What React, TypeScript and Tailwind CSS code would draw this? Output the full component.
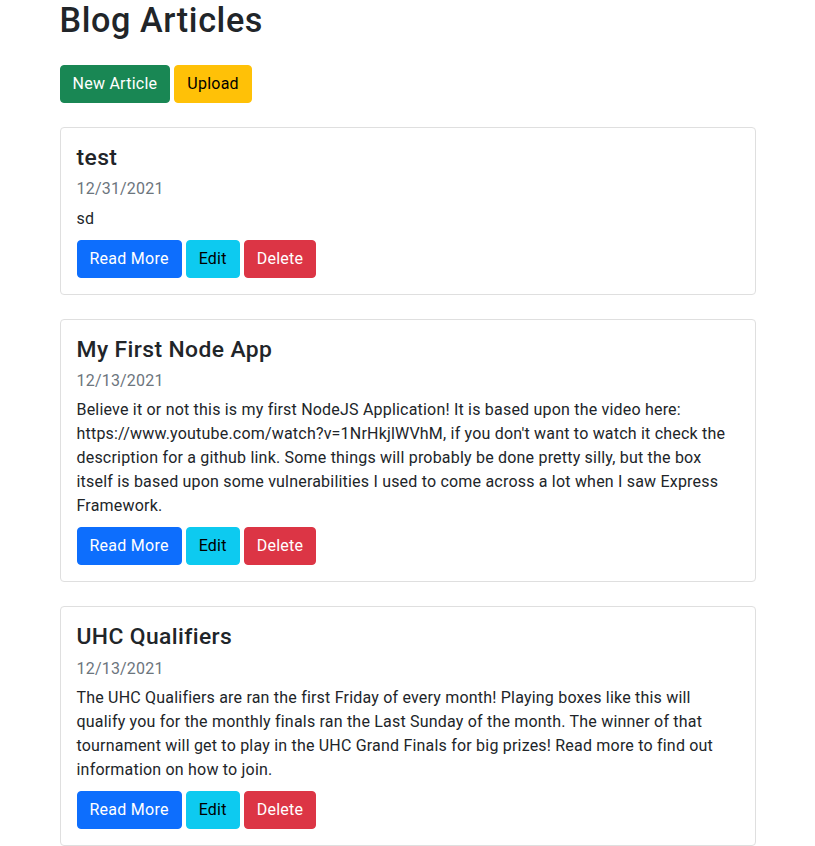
import React from "react";

type Article = { title: string; date: string; lines: string[] };

const articles: Article[] = [
  { title: "test", date: "12/31/2021", lines: ["sd"] },
  {
    title: "My First Node App",
    date: "12/13/2021",
    lines: [
      "Believe it or not this is my first NodeJS Application! It is based upon the video here:",
      "https://www.youtube.com/watch?v=1NrHkjlWVhM, if you don't want to watch it check the",
      "description for a github link. Some things will probably be done pretty silly, but the box",
      "itself is based upon some vulnerabilities I used to come across a lot when I saw Express",
      "Framework.",
    ],
  },
  {
    title: "UHC Qualifiers",
    date: "12/13/2021",
    lines: [
      "The UHC Qualifiers are ran the first Friday of every month! Playing boxes like this will",
      "qualify you for the monthly finals ran the Last Sunday of the month. The winner of that",
      "tournament will get to play in the UHC Grand Finals for big prizes! Read more to find out",
      "information on how to join.",
    ],
  },
];

const btn =
  "inline-block h-[38px] px-3 rounded-[4px] border text-[16px] leading-[24px] py-[6px] tracking-[0.25px]";

export default function App() {
  return (
    <div
      className="min-h-screen bg-white text-[#212529]"
      style={{ fontFamily: "Roboto, 'Noto Sans', sans-serif" }}
    >
      <div className="w-[720px] mx-auto px-3">
        <h1 className="text-[34.2px] leading-[1.2] font-medium mb-6 tracking-[0.6px]">Blog Articles</h1>
        <div className="flex gap-1">
          <a className={`${btn} bg-[#198754] border-[#198754] text-white`}>New Article</a>
          <a className={`${btn} bg-[#ffc107] border-[#ffc107] text-black`}>Upload</a>
        </div>
        <div className="mt-6 flex flex-col gap-6">
          {articles.map((a) => (
            <div
              key={a.title}
              className="border border-[#dfdfdf] rounded-[4px] p-4"
            >
              <h4 className="text-[22.85px] leading-[1.2] font-medium mb-2 tracking-[0.4px]">{a.title}</h4>
              <h6 className="text-[16px] leading-[1.2] text-[#6c757d] mb-2 tracking-[0.2px]">{a.date}</h6>
              <p className="text-[16px] leading-[24px] mb-[9px] tracking-[0.2px]">
                {a.lines.map((l, i) => (
                  <React.Fragment key={i}>
                    {l}
                    {i < a.lines.length - 1 && <br />}
                  </React.Fragment>
                ))}
              </p>
              <div className="flex gap-1">
                <a className={`${btn} bg-[#0d6efd] border-[#0d6efd] text-white`}>Read More</a>
                <a className={`${btn} bg-[#0dcaf0] border-[#0dcaf0] text-black`}>Edit</a>
                <a className={`${btn} bg-[#dc3545] border-[#dc3545] text-white`}>Delete</a>
              </div>
            </div>
          ))}
        </div>
      </div>
    </div>
  );
}
